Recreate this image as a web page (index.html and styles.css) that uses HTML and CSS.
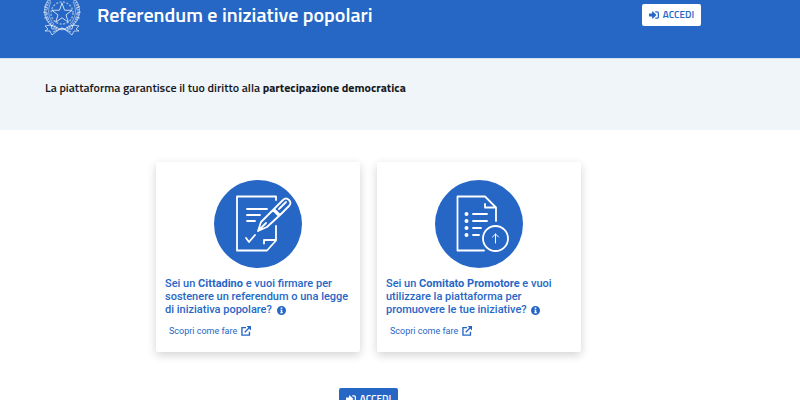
FILE: index.html
```html
<!DOCTYPE html>
<html lang="it">
<head>
<meta charset="utf-8">
<meta name="viewport" content="width=device-width, initial-scale=1">
<title>Referendum e iniziative popolari</title>
<link rel="stylesheet" href="styles.css">
</head>
<body>
<svg class="sprite" aria-hidden="true">
  <symbol id="sign-in" viewBox="0 0 512 512"><path d="M416 448h-84c-6.600 0-12-5.400-12-12v-40c0-6.600 5.400-12 12-12h84c17.700 0 32-14.300 32-32V160c0-17.700-14.300-32-32-32h-84c-6.600 0-12-5.400-12-12V76c0-6.600 5.400-12 12-12h84c53 0 96 43 96 96v192c0 53-43 96-96 96zm-47-209L201 71c-15-15-41-4.500-41 17v96H24c-13.300 0-24 10.700-24 24v96c0 13.300 10.700 24 24 24h136v96c0 21.500 26 32 41 17l168-168c9.300-9.400 9.300-24.600 0-34z"/></symbol>
  <symbol id="info" viewBox="0 0 16 16"><path fill-rule="evenodd" d="M8 0a8 8 0 1 0 0 16A8 8 0 0 0 8 0zM6.600 2.800h2.800v2.700H6.600zM5.800 6.600h3.600v4.600h1v1.600H5.800v-1.600h1V8.200h-1z"/></symbol>
  <symbol id="external" viewBox="0 0 16 16"><path d="M8 2.500H1.500v12h12V9M6 10l8-8" fill="none" stroke="currentColor" stroke-width="2.200"/><path d="M9 0h7v7z"/></symbol>
</svg>

<header class="header">
  <div class="brand">
    <svg class="emblem" viewBox="0 0 38 36" aria-hidden="true" fill="none" stroke="currentColor">
      <circle cx="19" cy="13" r="11" stroke-width="1.500" stroke-dasharray="2 1.500" opacity=".5"/>
      <path d="M19 3l2.500 7.200 7.600.1-6.100 4.600 2.300 7.300-6.300-4.400-6.300 4.400 2.300-7.300-6.100-4.600 7.600-.1z" stroke-width="1" opacity=".75"/>
      <path d="M7 0C1 7 1 18 9 25l5 3M31 0c6 7 6 18-2 25l-5 3" stroke-width="3" stroke-dasharray="1.500 1" opacity=".5"/>
      <path d="M5 0C-1 9 1 20 9 26M33 0c6 9 4 20-4 26M8 2c-4 7-3 16 3 22M30 2c4 7 3 16-3 22" stroke-width=".8" opacity=".6"/>
      <path d="M1 6l4 3M0 12l5 2M1 18l5 0M37 6l-4 3M38 12l-5 2M37 18l-5 0" opacity=".5"/>
      <path d="M2 26l6-1 11 5 11-5 6 1-3 3 3 2-5 0-2 4-5-4-5-3-5 3-5 4-2-4-5 0 3-2zM8 25l1 4 5 0M30 25l-1 4-5 0M10 32l9-4 9 4" stroke-width="1" opacity=".65"/>
    </svg>
    <h1 class="title">Referendum e iniziative popolari</h1>
  </div>
  <button class="button button-light" type="button"><svg class="icon" aria-hidden="true"><use href="#sign-in"/></svg>ACCEDI</button>
</header>

<section class="intro">
  <p class="lead">La piattaforma garantisce il tuo diritto alla <strong>partecipazione democratica</strong></p>
</section>

<main class="main">
  <div class="cards">
    <article class="card">
      <svg class="picture" viewBox="0 0 88 88" aria-hidden="true">
        <circle class="disc" cx="44" cy="44" r="44"/>
        <g fill="none" stroke="#fff" stroke-width="1.800" stroke-linecap="round" stroke-linejoin="round">
          <path d="M62 20v-3.500H23v54h30l9-10V46M50 63.500V60h12"/>
          <path d="M33 29h20M33 35h13M33 41h8M32 58l3 4 6-7"/>
          <path d="M44 51l3-9 13-13 6 6-13 12zM44 51l8-8M59 30l10-10q3-3 6 0t0 6L65 36zM65 29l7-7"/>
        </g>
      </svg>
      <h2 class="question">Sei un <strong>Cittadino</strong> e vuoi firmare per sostenere un referendum o una legge di iniziativa popolare? <svg class="info" aria-hidden="true"><use href="#info"/></svg></h2>
      <a class="more" href="#cittadino">Scopri come fare<svg class="icon" aria-hidden="true"><use href="#external"/></svg></a>
    </article>
    <article class="card">
      <svg class="picture" viewBox="0 0 88 88" aria-hidden="true">
        <circle class="disc" cx="44" cy="44" r="44"/>
        <g fill="none" stroke="#fff" stroke-width="1.800" stroke-linecap="round" stroke-linejoin="round">
          <path d="M49 70.500H22.500v-54H50l11 11V41M50 24v3.500h11"/>
          <path d="M38 34h14M38 41h14M38 48h8M38 55h6"/>
          <circle cx="60.500" cy="58.500" r="12.500"/>
          <path d="M60.500 63V54M57.500 57l3-3 3 3" stroke-width="1"/>
        </g>
        <g fill="#fff"><circle cx="31.500" cy="34" r="2"/><circle cx="31.500" cy="41" r="2"/><circle cx="31.500" cy="48" r="2"/><circle cx="31.500" cy="55" r="2"/></g>
      </svg>
      <h2 class="question">Sei un <strong>Comitato Promotore</strong> e vuoi utilizzare la piattaforma per promuovere le tue iniziative? <svg class="info" aria-hidden="true"><use href="#info"/></svg></h2>
      <a class="more" href="#comitato">Scopri come fare<svg class="icon" aria-hidden="true"><use href="#external"/></svg></a>
    </article>
  </div>
  <button class="button button-blue" type="button"><svg class="icon" aria-hidden="true"><use href="#sign-in"/></svg>ACCEDI</button>
</main>
</body>
</html>
```
FILE: styles.css
```css
:root {
  --blue: #2667c6;
  --heading: "Titillium Web", "Noto Sans", sans-serif;
}

* { box-sizing: border-box; }

body {
  margin: 0;
  background: #fff;
  color: #17191c;
  font-family: Roboto, sans-serif;
}

.sprite { display: none; }

.header {
  display: flex;
  justify-content: space-between;
  align-items: flex-start;
  height: 58px;
  padding: 0 99px 0 43px;
  background: var(--blue);
  color: #fff;
}

.brand {
  display: flex;
  gap: 16px;
}

.emblem {
  width: 38px;
  height: 36px;
}

.title {
  margin: 0;
  font: 600 20px/30px var(--heading);
}

.button {
  display: flex;
  align-items: center;
  justify-content: center;
  gap: 4px;
  width: 59px;
  height: 22px;
  padding: 0;
  border: 0;
  border-radius: 2px;
  font: 600 10px/22px var(--heading);
}

.icon {
  flex: none;
  width: 10px;
  height: 10px;
  fill: currentColor;
}

.button-light {
  margin-top: 4px;
  background: #fff;
  color: var(--blue);
}

.button-blue {
  background: var(--blue);
  color: #fff;
}

.intro {
  height: 72px;
  padding: 20px 43px;
  border-top: 1px solid #d4e2f2;
  background: #f0f5fa;
}

.lead {
  margin: 0;
  padding-left: 2px;
  font: 600 12px/18px var(--heading);
}

.lead strong { font-weight: 700; }

.main {
  display: flex;
  flex-direction: column;
  align-items: center;
  gap: 36px;
  padding: 32px 99px 24px 36px;
}

.cards {
  display: flex;
  flex-wrap: wrap;
  justify-content: center;
  gap: 17px;
}

.card {
  display: flex;
  flex-direction: column;
  width: 204px;
  padding: 18px 9px 14px;
  border-radius: 2px;
  box-shadow: 0 3px 10px rgb(0 0 0 / 18%);
  color: var(--blue);
}

.picture {
  align-self: center;
  width: 88px;
  height: 88px;
}

.disc { fill: var(--blue); }

.question {
  margin: 9px 0 0;
  font-size: 11px;
  font-weight: 500;
  line-height: 13px;
}

.question strong { font-weight: 700; }

.info {
  width: 9px;
  height: 9px;
  margin-left: 2px;
  vertical-align: -2px;
  fill: currentColor;
}

.more {
  display: flex;
  align-items: center;
  gap: 4px;
  margin-top: 8px;
  padding-left: 4px;
  color: inherit;
  font-size: 9px;
  line-height: 14px;
  text-decoration: none;
}
```
